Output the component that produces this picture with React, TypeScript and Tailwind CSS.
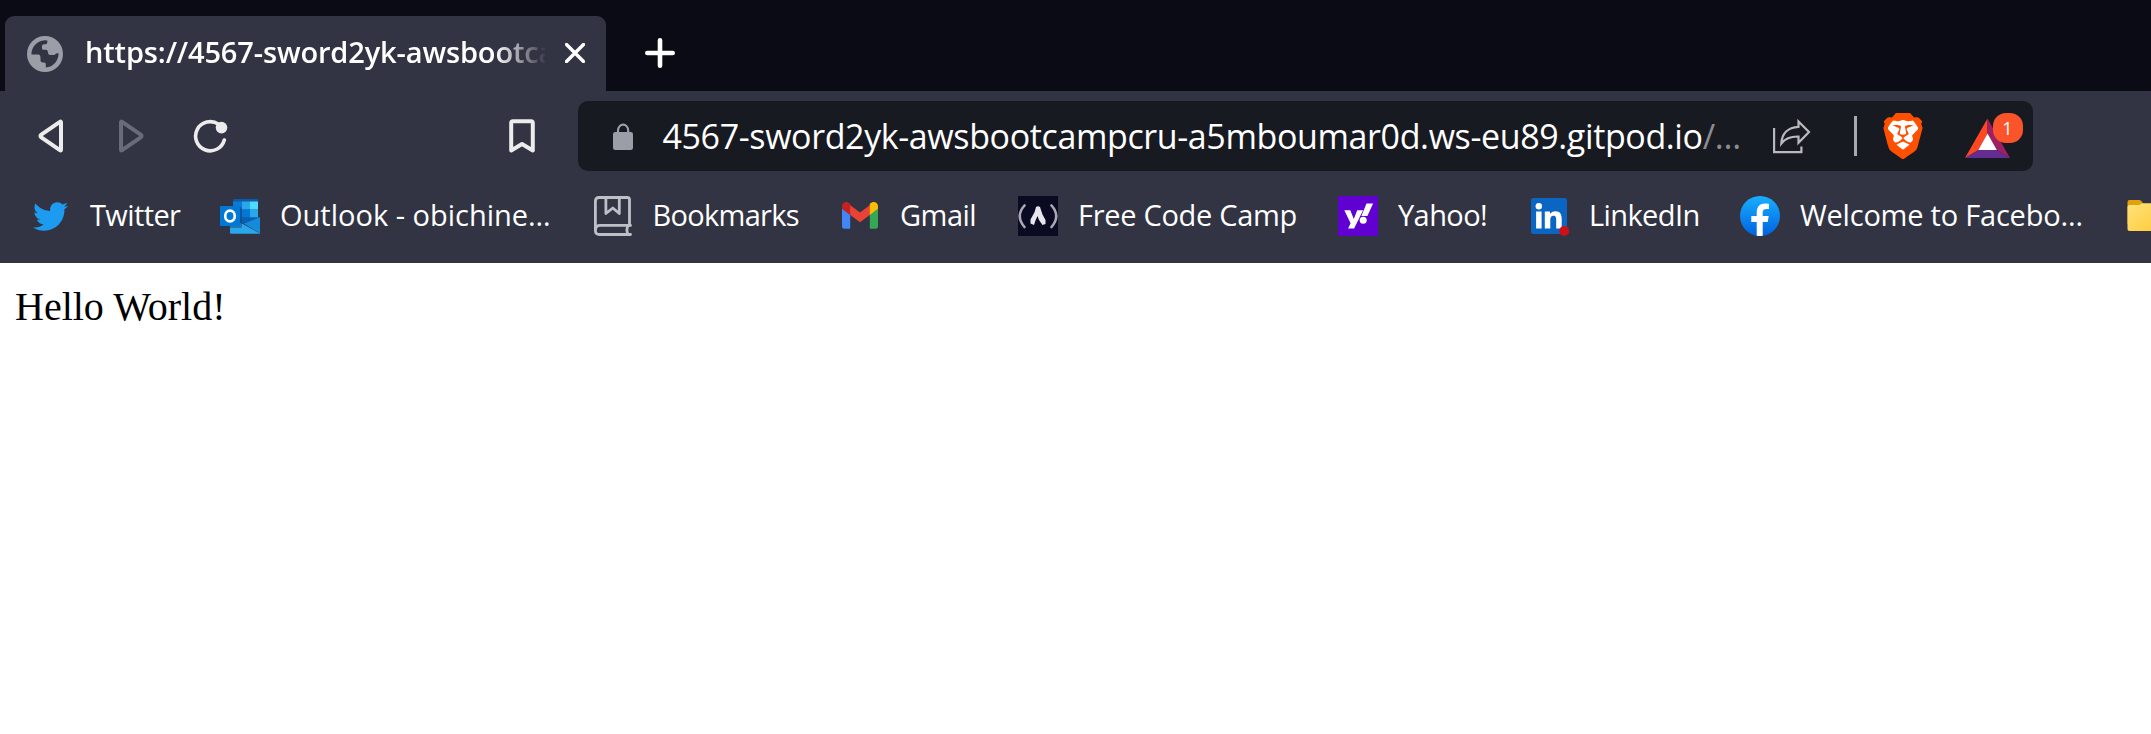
import React from "react";
import { FaTwitter } from "react-icons/fa";
import { SiBrave } from "react-icons/si";

const Globe = () => (
  <svg viewBox="0 0 36 36" className="h-9 w-9 shrink-0">
    <circle cx="18" cy="18" r="18" fill="#9b9ea7" />
    <path
      fill="#323443"
      d="M4.500 16.800A13.700 13.700 0 0 1 20.300 4.500V6.200Q20.300 8 18.500 8.200H17Q15 8.400 15 10.200V12.300Q15 13.800 16.500 13.800H19Q20.600 13.800 20.800 15.500L21.200 17.500Q21.700 19 23.500 19H26.500Q28 19 28.800 17.800Q29.500 17 31.500 17.300A13.700 13.700 0 0 1 18.800 31.500V28Q18.800 26.600 17.300 26.400H15.500Q13.500 26.200 13.500 24.500V22Q13.500 18.600 11 18.600H4.500Z"
    />
  </svg>
);

const Back = ({ tone }: { tone: string }) => (
  <svg viewBox="0 0 26 34" className={`h-[34px] w-[26px] ${tone}`}>
    <path
      d="M23 3.300v27.400q0 1.200-1.100.400L3.300 18.300q-1.700-1.300 0-2.600L21.900 2.900Q23 2.100 23 3.300Z"
      fill="none"
      stroke="currentColor"
      strokeWidth="4"
      strokeLinejoin="round"
    />
  </svg>
);

const Reload = () => (
  <svg viewBox="0 0 36 34" className="h-[34px] w-9">
    <path d="M25.500 5.200A14.600 14.600 0 1 0 31.300 21" fill="none" stroke="#ececec" strokeWidth="3.600" strokeLinecap="round" />
    <circle cx="28.500" cy="8.600" r="5.800" fill="#ececec" />
  </svg>
);

const Outlook = () => (
  <svg viewBox="0 0 40 40" className="h-10 w-10">
    <path fill="#0a5cab" d="M13 3.500q0-.5.600-.5H37q1 0 1 .9V22H13Z" />
    <path fill="#0f78d4" d="M13 5.500h9v8h-9Z" />
    <path fill="#28a8ea" d="M22 5.500h8v8h-8Z" />
    <path fill="#50d9ff" d="M30 5.500h8v8h-8Z" />
    <path fill="#0364b8" d="M13 13.500h9v8h-9Z" />
    <path fill="#0078d4" d="M22 13.500h8v8h-8Z" />
    <path fill="#28a8ea" d="M30 13.500h8v8h-8Z" />
    <path fill="#0a5fb5" d="M12 21.500h26L25 28.500Z" />
    <path fill="#148bdb" d="M40 21v16.500L24 27.800Z" />
    <path fill="#28a8ea" d="M10 21l30 16.500q-.4.300-1 .3H11.500q-1.500 0-1.500-1.300Z" />
    <rect x="1" y="11" width="21" height="21" rx="1" fill="#123f70" opacity=".45" />
    <rect y="10" width="20" height="20" rx="1" fill="#0078d4" />
    <ellipse cx="10" cy="20" rx="4.800" ry="5.300" fill="none" stroke="#fff" strokeWidth="2.700" />
  </svg>
);

const Book = () => (
  <svg viewBox="0 0 40 40" className="h-10 w-10" fill="none" stroke="#bdc0c7" strokeWidth="2.800" strokeLinejoin="round" strokeLinecap="round">
    <path d="M36.500 29.300V3.500q0-2-2-2H6q-3.600 0-3.600 3.600v29.400q0 4 4 4H37.500" />
    <path d="M2.600 33.300q.4-3.900 4.400-3.900h30.500M34.500 30.500q-1.300 3.500 0 7" />
    <path d="M12.900 2v15.500l6.900-5.500 6.500 5.500V2" />
  </svg>
);

const Gmail = () => (
  <svg viewBox="0 0 40 40" className="h-10 w-10">
    <path fill="#4285f4" d="M2 12.500l8.200 6V32.800H4.500Q2 32.800 2 30.300Z" />
    <path fill="#34a853" d="M38 12.500l-8.200 6V32.800h5.700q2.500 0 2.500-2.500Z" />
    <path fill="#ea4335" d="M10 9l10 7.500L30 9v9.800L20 26.300l-10-7.500Z" />
    <path fill="#c5221f" d="M2 10.500C2 6 6.800 4.400 10.200 7.800V19L2 12.800Z" />
    <path fill="#fbbc04" d="M38 10.500C38 6 33.200 4.400 29.800 7.800V19L38 12.800Z" />
  </svg>
);

const FreeCodeCamp = () => (
  <svg viewBox="0 0 40 40" className="h-10 w-10">
    <rect width="40" height="40" fill="#0a0a23" />
    <g fill="none" stroke="#a9a9b5" strokeWidth="2.600" strokeLinecap="round">
      <path d="M6.500 9.500Q-3 20 6.500 31" />
      <path d="M33.500 9.500Q43 20 33.500 31" />
    </g>
    <path
      fill="#e6e6ec"
      d="M18 11q2-1.500 4 0l2.500 7.500 3 5.500v4l-3 1-3.500-5-1.500-4-2 4.500-1.500 4.500-3.500-1.500v-4l2.500-4.500q2-3 3-8Z"
    />
  </svg>
);

const Yahoo = () => (
  <svg viewBox="0 0 40 40" className="h-10 w-10">
    <rect width="40" height="40" fill="#6001d2" />
    <g fill="#fff">
      <path d="M6.300 14.200h6l3.500 8.700 3.400-8.700h5.900L16.100 32.500h-6l2.500-5.300Z" />
      <circle cx="25.200" cy="24.300" r="3.500" />
      <path d="M28.500 7.500h6.600L29.400 20h-6Z" />
    </g>
  </svg>
);

const LinkedIn = () => (
  <svg viewBox="0 0 40 40" className="h-10 w-10">
    <rect x="2" y="2" width="36" height="36" rx="2.500" fill="#0a66c2" />
    <g fill="#fff">
      <circle cx="9.800" cy="10.200" r="3.200" />
      <path d="M7.100 15.600h5.500v17H7.100ZM15.800 15.600H21V18c1-1.700 2.900-2.800 5.400-2.800 5 0 6.300 3.200 6.300 7.800v9.600h-5.500v-8.500c0-2.300-.3-4.300-2.700-4.300-2.500 0-3.200 1.800-3.200 4.200v8.600h-5.500Z" />
    </g>
    <circle cx="35.200" cy="35" r="5" fill="#cc1016" />
  </svg>
);

const Facebook = () => (
  <svg viewBox="0 0 40 40" className="h-10 w-10">
    <defs>
      <linearGradient id="fb" x1="0" y1="0" x2="0" y2="1">
        <stop offset="0" stopColor="#19afff" />
        <stop offset="1" stopColor="#0062e0" />
      </linearGradient>
    </defs>
    <circle cx="20" cy="20" r="20" fill="url(#fb)" />
    <path fill="#fff" d="M16.700 39.800V26H11.300v-6h5.400v-3c0-6.500 3-9.500 8.600-9.500 1.300 0 2.800.1 3.600.3v5.200h-2.500c-2.700 0-3.700 1.200-3.700 3.500V20h6l-1 6h-5v13.800q-3 .4-6 0Z" />
  </svg>
);

const Folder = () => (
  <svg viewBox="0 0 40 40" className="h-10 w-10">
    <defs>
      <linearGradient id="fold" x1="0" y1="0" x2="1" y2="1">
        <stop offset="0" stopColor="#ffe27a" />
        <stop offset="1" stopColor="#ffc937" />
      </linearGradient>
    </defs>
    <path fill="#dea20c" d="M3.500 6q0-2 2-2h9.500q1.500 0 2.500 1.300l2 2.700H38v20H3.500Z" />
    <path fill="url(#fold)" d="M3.500 11q0-2 2-2h9.500l3.500-1.800H38q2 0 2 2V35H5.500q-2 0-2-2Z" />
  </svg>
);

const Lock = () => (
  <svg viewBox="0 0 20 27" className="h-[27px] w-5 shrink-0">
    <path d="M5 11V7.500a5 5.700 0 0 1 10.200 0V11" fill="none" stroke="#9b9ea7" strokeWidth="2.200" />
    <rect y="9" width="20" height="18" rx="2.200" fill="#9b9ea7" />
  </svg>
);

const Share = () => (
  <svg viewBox="0 0 38 36" className="h-9 w-[38px]" fill="none" stroke="#b9babd" strokeWidth="2.200">
    <path d="M1.100 10v24.200h27.300V28.500" />
    <path d="M25.500 3.500L36 14 25.500 24.800V18.500C17 18.300 12 20.500 8.300 25.500 8.800 16 14.500 9.300 25.500 8.800Z" />
  </svg>
);

const Brave = () => (
  <span className="relative flex h-[46px] w-[40px] items-center justify-center">
    <svg viewBox="0 0 40 46" className="absolute h-[46px] w-10">
      <path fill="#fff" d="M8 6.500h24l4 4-.5 8-4.500 16-11 6-11-6-4.500-16-.5-8Z" />
    </svg>
    <SiBrave className="relative h-[46px] w-[46px] shrink-0 text-[#ff5000]" />
  </span>
);

const Rewards = () => (
  <span className="relative h-[46px] w-[58px]">
    <svg viewBox="0 0 46 40" className="absolute top-[5px] left-0 h-10 w-[46px]">
      <path fill="#ff4724" d="M22.500.5v15L13.500 32 0 40Z" />
      <path fill="#9e1f63" d="M22.500.5L45 40 31.500 32l-9-16.500Z" />
      <path fill="#662d91" d="M0 40h45L31.500 32h-18Z" />
      <path fill="#fff" d="M22.500 15.500L31.800 32H13.300Z" />
    </svg>
    <span className="absolute top-0 left-[28px] flex h-[30px] w-[30px] items-center justify-center rounded-[13px] bg-[#fb542b] text-[18px] leading-none text-white">
      1
    </span>
  </span>
);

type Item = { icon: React.ReactNode; label: string; width: string; tracking: string };

const items: Item[] = [
  { icon: <FaTwitter className="h-[35px] w-[35px] text-[#1d9bf0]" />, label: "Twitter", width: "w-[190px]", tracking: "tracking-[-0.6px]" },
  { icon: <Outlook />, label: "Outlook - obichine…", width: "w-[372.5px]", tracking: "tracking-[0px]" },
  { icon: <Book />, label: "Bookmarks", width: "w-[247.5px]", tracking: "tracking-[-0.7px]" },
  { icon: <Gmail />, label: "Gmail", width: "w-[178px]", tracking: "tracking-[-0.5px]" },
  { icon: <FreeCodeCamp />, label: "Free Code Camp", width: "w-[320px]", tracking: "tracking-[-0.3px]" },
  { icon: <Yahoo />, label: "Yahoo!", width: "w-[191px]", tracking: "tracking-[-0.6px]" },
  { icon: <LinkedIn />, label: "LinkedIn", width: "w-[211px]", tracking: "tracking-[-0.6px]" },
  { icon: <Facebook />, label: "Welcome to Facebo…", width: "w-[384px]", tracking: "tracking-[-0.22px]" },
  { icon: <Folder />, label: "", width: "w-10", tracking: "tracking-[0px]" },
];

export default function App() {
  return (
    <div className="flex h-[734px] w-[2151px] flex-col overflow-hidden bg-white font-['Open_Sans','Noto_Sans',sans-serif] text-white">
      <div className="flex h-[91px] shrink-0 items-end bg-[#0a0b14] pl-[5px]">
        <div className="flex h-[75px] w-[600.5px] items-center rounded-t-[9px] bg-[#323443] pl-[22px]">
          <Globe />
          <div className="ml-[22px] w-[460px] overflow-hidden mask-[linear-gradient(to_right,black_410px,transparent_462px)] pb-[3px] text-[29px] leading-10 font-semibold whitespace-nowrap tracking-[-0.14px]">
            https://4567-sword2yk-awsbootca
          </div>
          <svg viewBox="0 0 20 20" className="mb-px ml-[20px] h-5 w-5 shrink-0">
            <path d="M1.500 1.500l17 17M18.500 1.500l-17 17" stroke="#fff" strokeWidth="3.400" strokeLinecap="round" />
          </svg>
        </div>
        <div className="flex h-[75px] items-center pb-px pl-[39px]">
          <svg viewBox="0 0 30 30" className="h-[30px] w-[30px]">
            <path d="M15 2.300v25.400M2.300 15h25.400" stroke="#fff" strokeWidth="4.600" strokeLinecap="round" />
          </svg>
        </div>
      </div>

      <div className="flex h-[90px] shrink-0 items-center bg-[#323443] pl-[38px]">
        <Back tone="text-[#ececec]" />
        <div className="ml-[54px] -scale-x-100">
          <Back tone="text-[#6a6b78]" />
        </div>
        <div className="ml-[49px]">
          <Reload />
        </div>
        <svg viewBox="0 0 26 34" className="ml-[280px] h-[34px] w-[26px] shrink-0">
          <path d="M4 2.200h18q1.800 0 1.800 1.800v27.500L13 25 2.200 31.500V4q0-1.800 1.800-1.800Z" fill="none" stroke="#ececec" strokeWidth="4" strokeLinejoin="round" />
        </svg>
        <div className="ml-[43px] flex h-[70px] w-[1455px] shrink-0 items-center rounded-[10px] bg-[#181a21] pl-[35px]">
          <Lock />
          <div className="ml-[29.5px] w-[1110px] text-[34px] leading-[46px] whitespace-nowrap tracking-[-0.38px]">
            4567-sword2yk-awsbootcampcru-a5mboumar0d.ws-eu89.gitpod.io<span className="text-[#8b8c90]">/…</span>
          </div>
          <Share />
          <div className="ml-[43px] h-10 w-[3px] bg-[#a9aaad]" />
          <div className="ml-[26px]">
            <Brave />
          </div>
          <div className="ml-[42px] flex">
            <Rewards />
          </div>
        </div>
      </div>

      <div className="flex h-[82px] shrink-0 items-start overflow-hidden bg-[#323443] pt-[15px] pl-[30px]">
        {items.map((it, i) => (
          <div key={i} className={`flex h-10 shrink-0 items-center gap-5 ${it.width}`}>
            <span className="flex h-10 w-10 shrink-0 items-center justify-center">{it.icon}</span>
            <span className={`pb-0.5 text-[29px] leading-10 whitespace-nowrap ${it.tracking}`}>{it.label}</span>
          </div>
        ))}
      </div>

      <div className="px-[15px] pt-[21px] font-['Liberation_Serif',serif] text-[40px] leading-[46px] text-black">Hello World!</div>
    </div>
  );
}
